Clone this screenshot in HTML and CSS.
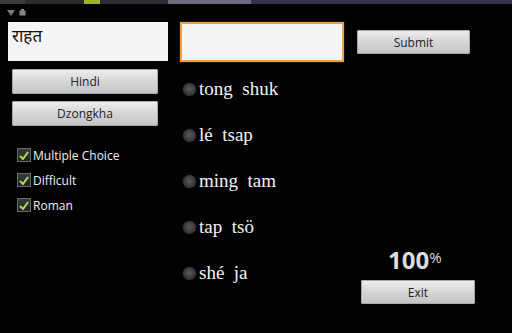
FILE: index.html
```html
<!DOCTYPE html>
<html>
<head>
<meta charset="utf-8">
<link rel="stylesheet" href="styles.css">
</head>
<body>
<div class="topstrip">
  <span class="seg s1"></span><span class="seg s2"></span><span class="seg s3"></span><span class="seg s4"></span><span class="seg s5"></span><span class="seg s6"></span>
</div>
<div class="iconrow">
  <svg width="8" height="6" viewBox="0 0 8 6"><path d="M0 0 L8 0 L4 6 Z" fill="#777"/></svg>
  <svg width="7" height="7" viewBox="0 0 7 7"><rect x="0.5" y="1.5" width="6" height="5" fill="#888"/><rect x="2" y="0" width="3" height="2" fill="#888"/></svg>
</div>
<div class="toprow">
  <div class="field first">राहत</div>
  <div class="field focused"></div>
  <div class="btn submit">Submit</div>
</div>
<div class="main">
  <div class="leftcol">
    <div class="btn lang">Hindi</div>
    <div class="btn lang">Dzongkha</div>
    <div class="checks">
      <div class="check"><span class="box"><svg width="10" height="9" viewBox="0 0 10 9"><path d="M1 5 L4 8 L9 1" stroke="#a6e05a" stroke-width="2" fill="none"/></svg></span>Multiple Choice</div>
      <div class="check"><span class="box"><svg width="10" height="9" viewBox="0 0 10 9"><path d="M1 5 L4 8 L9 1" stroke="#a6e05a" stroke-width="2" fill="none"/></svg></span>Difficult</div>
      <div class="check"><span class="box"><svg width="10" height="9" viewBox="0 0 10 9"><path d="M1 5 L4 8 L9 1" stroke="#a6e05a" stroke-width="2" fill="none"/></svg></span>Roman</div>
    </div>
  </div>
  <div class="midcol">
    <div class="radio"><span class="dot"></span>tong&nbsp; shuk</div>
    <div class="radio"><span class="dot"></span>lé&nbsp; tsap</div>
    <div class="radio"><span class="dot"></span>ming&nbsp; tam</div>
    <div class="radio"><span class="dot"></span>tap&nbsp; tsö</div>
    <div class="radio"><span class="dot"></span>shé&nbsp; ja</div>
  </div>
  <div class="rightcol">
    <div class="score">100<span class="pct">%</span></div>
    <div class="btn exit">Exit</div>
  </div>
</div>
</body>
</html>
```
FILE: styles.css
```css
html, body {
  margin: 0;
  padding: 0;
  background: #020104;
  width: 512px;
  height: 333px;
  overflow: hidden;
  font-family: "Open Sans", "Liberation Sans", sans-serif;
}
.topstrip {
  display: flex;
  height: 4px;
}
.seg { display: block; height: 4px; }
.s1 { width: 25px; background: #3c3c3c; }
.s2 { width: 59px; background: #2a2a2c; }
.s3 { width: 16px; background: #9bb52a; }
.s4 { width: 68px; background: #2e2e32; }
.s5 { width: 83px; background: #6a6a7c; }
.s6 { flex: 1; background: #34324e; }
.iconrow {
  display: flex;
  gap: 4px;
  align-items: center;
  height: 9px;
  padding: 4px 0 0 7px;
}
.toprow {
  display: flex;
  align-items: flex-start;
  padding: 5px 0 0 8px;
}
.field {
  box-sizing: border-box;
  background: #f5f4f6;
  height: 39px;
}
.field.first {
  width: 160px;
  font-family: "Noto Sans", "Liberation Sans", sans-serif;
  font-size: 17px;
  color: #111;
  padding: 2px 0 0 4px;
}
.field.focused {
  width: 164px;
  height: 40px;
  margin-left: 12px;
  border: 2px solid #f0a23a;
  box-shadow: 0 0 1px #c57a20;
}
.btn {
  box-sizing: border-box;
  background: linear-gradient(#ececec, #d2d2d2 60%, #c4c4c4);
  border: 1px solid #a8a8a8;
  border-radius: 1px;
  color: #222;
  font-size: 12px;
  display: flex;
  align-items: center;
  justify-content: center;
}
.submit {
  width: 113px;
  height: 24px;
  margin: 8px 0 0 13px;
}
.main {
  display: flex;
}
.leftcol {
  width: 172px;
  padding: 7px 0 0 12px;
  box-sizing: border-box;
}
.lang {
  width: 146px;
  height: 25px;
  margin-bottom: 7px;
}
.checks {
  padding: 15px 0 0 5px;
  display: flex;
  flex-direction: column;
  gap: 11px;
}
.check {
  display: flex;
  align-items: center;
  height: 14px;
  color: #f0f0f0;
  font-size: 12px;
}
.box {
  box-sizing: border-box;
  width: 14px;
  height: 14px;
  border: 1px solid #6a6a6a;
  background: linear-gradient(#3a3a3a, #222);
  display: flex;
  align-items: center;
  justify-content: center;
  margin-right: 2px;
}
.midcol {
  width: 177px;
  padding: 4px 0 0 11px;
  box-sizing: border-box;
}
.radio {
  height: 46px;
  display: flex;
  align-items: center;
  font-family: "Liberation Serif", serif;
  font-size: 19px;
  color: #f2f2f2;
}
.dot {
  width: 13px;
  height: 13px;
  border-radius: 50%;
  background: radial-gradient(circle at 50% 45%, #5a5a5a, #3a3a3a 55%, #222 100%);
  box-shadow: 0 0 1px #555;
  margin-right: 3px;
}
.rightcol {
  display: flex;
  flex-direction: column;
  padding: 186px 0 0 12px;
}
.score {
  color: #dcdcdc;
  font-family: "Open Sans", "Liberation Sans", sans-serif;
  font-weight: bold;
  font-size: 24px;
  line-height: 24px;
  margin-left: 27px;
  display: flex;
  align-items: flex-start;
}
.pct {
  font-size: 15px;
  font-weight: normal;
  line-height: 18px;
}
.exit {
  width: 114px;
  height: 24px;
  margin-top: 8px;
}
```
